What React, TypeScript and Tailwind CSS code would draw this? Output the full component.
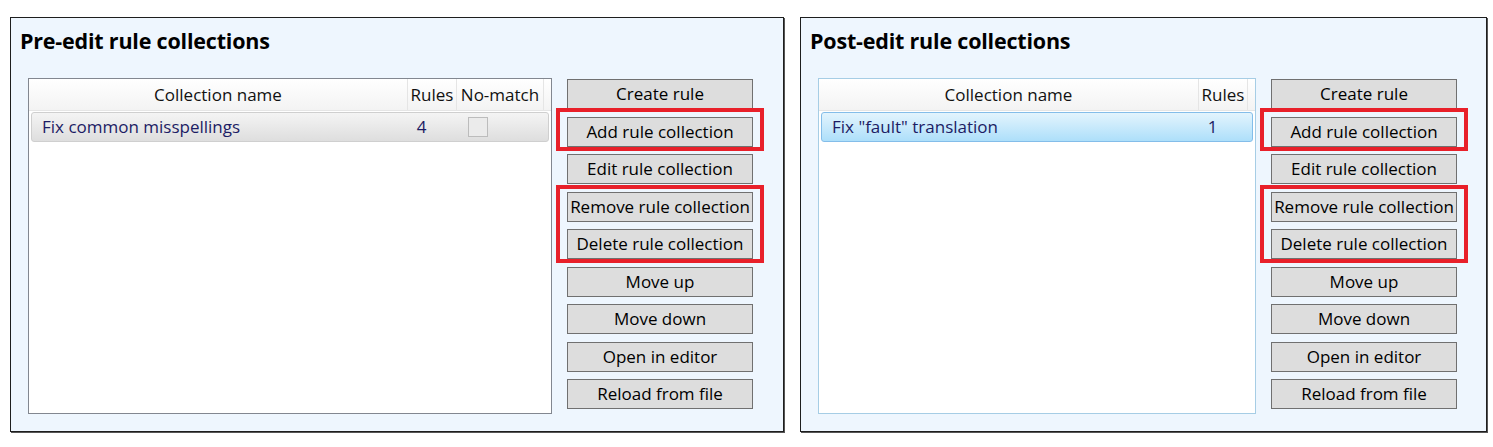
const buttons = [
  "Create rule",
  "Add rule collection",
  "Edit rule collection",
  "Remove rule collection",
  "Delete rule collection",
  "Move up",
  "Move down",
  "Open in editor",
  "Reload from file",
];

const font = { fontFamily: '"Open Sans", "Noto Sans", sans-serif' };

type PanelProps = {
  title: string;
  width: string;
  listWidth: string;
  focused: boolean;
  item: string;
  count: string;
  noMatch: boolean;
};

const Panel = ({ title, width, listWidth, focused, item, count, noMatch }: PanelProps) => {
  return (
    <div
      className={`${width} h-[415px] shrink-0 border border-[#1e1e1e] shadow-[1px_1px_0_#555] bg-[#eef6fe] pt-[9px] pl-[9px]`}
    >
      <h2 className="text-[21.5px] leading-[28px] font-bold text-black tracking-[-0.2px]">{title}</h2>
      <div className="flex gap-[15px] mt-[23px] ml-[8px]">
        <div
          className={`${listWidth} h-[336px] bg-white border ${
            focused ? "border-[#a6cde5]" : "border-[#828790]"
          }`}
        >
          <div className="flex h-[32px] text-[17px] text-[#111] bg-gradient-to-b from-white to-[#f3f3f3] border-b border-[#e5e5e5]">
            <div className="flex-1 flex items-center justify-center border-r border-[#e5e5e5]">
              Collection name
            </div>
            <div className="w-[49px] flex items-center justify-center border-r border-[#e5e5e5]">
              Rules
            </div>
            {noMatch && (
              <div className="w-[87px] flex items-center justify-center border-r border-[#e5e5e5]">
                No-match
              </div>
            )}
            <div className="w-[7px]" />
          </div>
          <div
            className={`mx-[2px] mt-[1px] h-[30px] rounded-[3px] border flex items-center text-[17px] text-[#1c1c64] ${
              focused
                ? "border-[#84bde9] bg-gradient-to-b from-[#e3f4fd] to-[#addffa]"
                : "border-[#cfcfcf] bg-gradient-to-b from-[#f4f4f4] to-[#dedede]"
            }`}
          >
            <div className="flex-1 pl-[10px]">{item}</div>
            <div className="w-[49px] text-center pr-[20px]">{count}</div>
            {noMatch && (
              <div className="w-[87px] flex justify-center pr-[44px]">
                <div className="w-[20px] h-[20px] border border-[#bcbcbc] bg-[#ebebeb]" />
              </div>
            )}
            <div className="w-[5px]" />
          </div>
        </div>
        <div className="relative w-[186px] mt-[1px] flex flex-col gap-[7.5px]">
          {buttons.map((b) => (
            <div
              key={b}
              className="h-[30px] bg-[#dddddd] border border-[#707070] flex items-center justify-center text-[17px] text-black whitespace-nowrap"
            >
              {b}
            </div>
          ))}
          <div className="absolute left-[-11px] top-[29px] w-[208px] h-[43px] border-[4px] border-[#e8202a]" />
          <div className="absolute left-[-11px] top-[106px] w-[208px] h-[78px] border-[4px] border-[#e8202a]" />
        </div>
      </div>
    </div>
  );
};

export default function App() {
  return (
    <div className="w-[1493px] h-[447px] bg-white flex gap-[16px] pt-[17px] pl-[10px]" style={font}>
      <Panel
        title="Pre-edit rule collections"
        width="w-[774px]"
        listWidth="w-[524px]"
        focused={false}
        item="Fix common misspellings"
        count="4"
        noMatch={true}
      />
      <Panel
        title="Post-edit rule collections"
        width="w-[687px]"
        listWidth="w-[438px]"
        focused={true}
        item={'Fix "fault" translation'}
        count="1"
        noMatch={false}
      />
    </div>
  );
}
